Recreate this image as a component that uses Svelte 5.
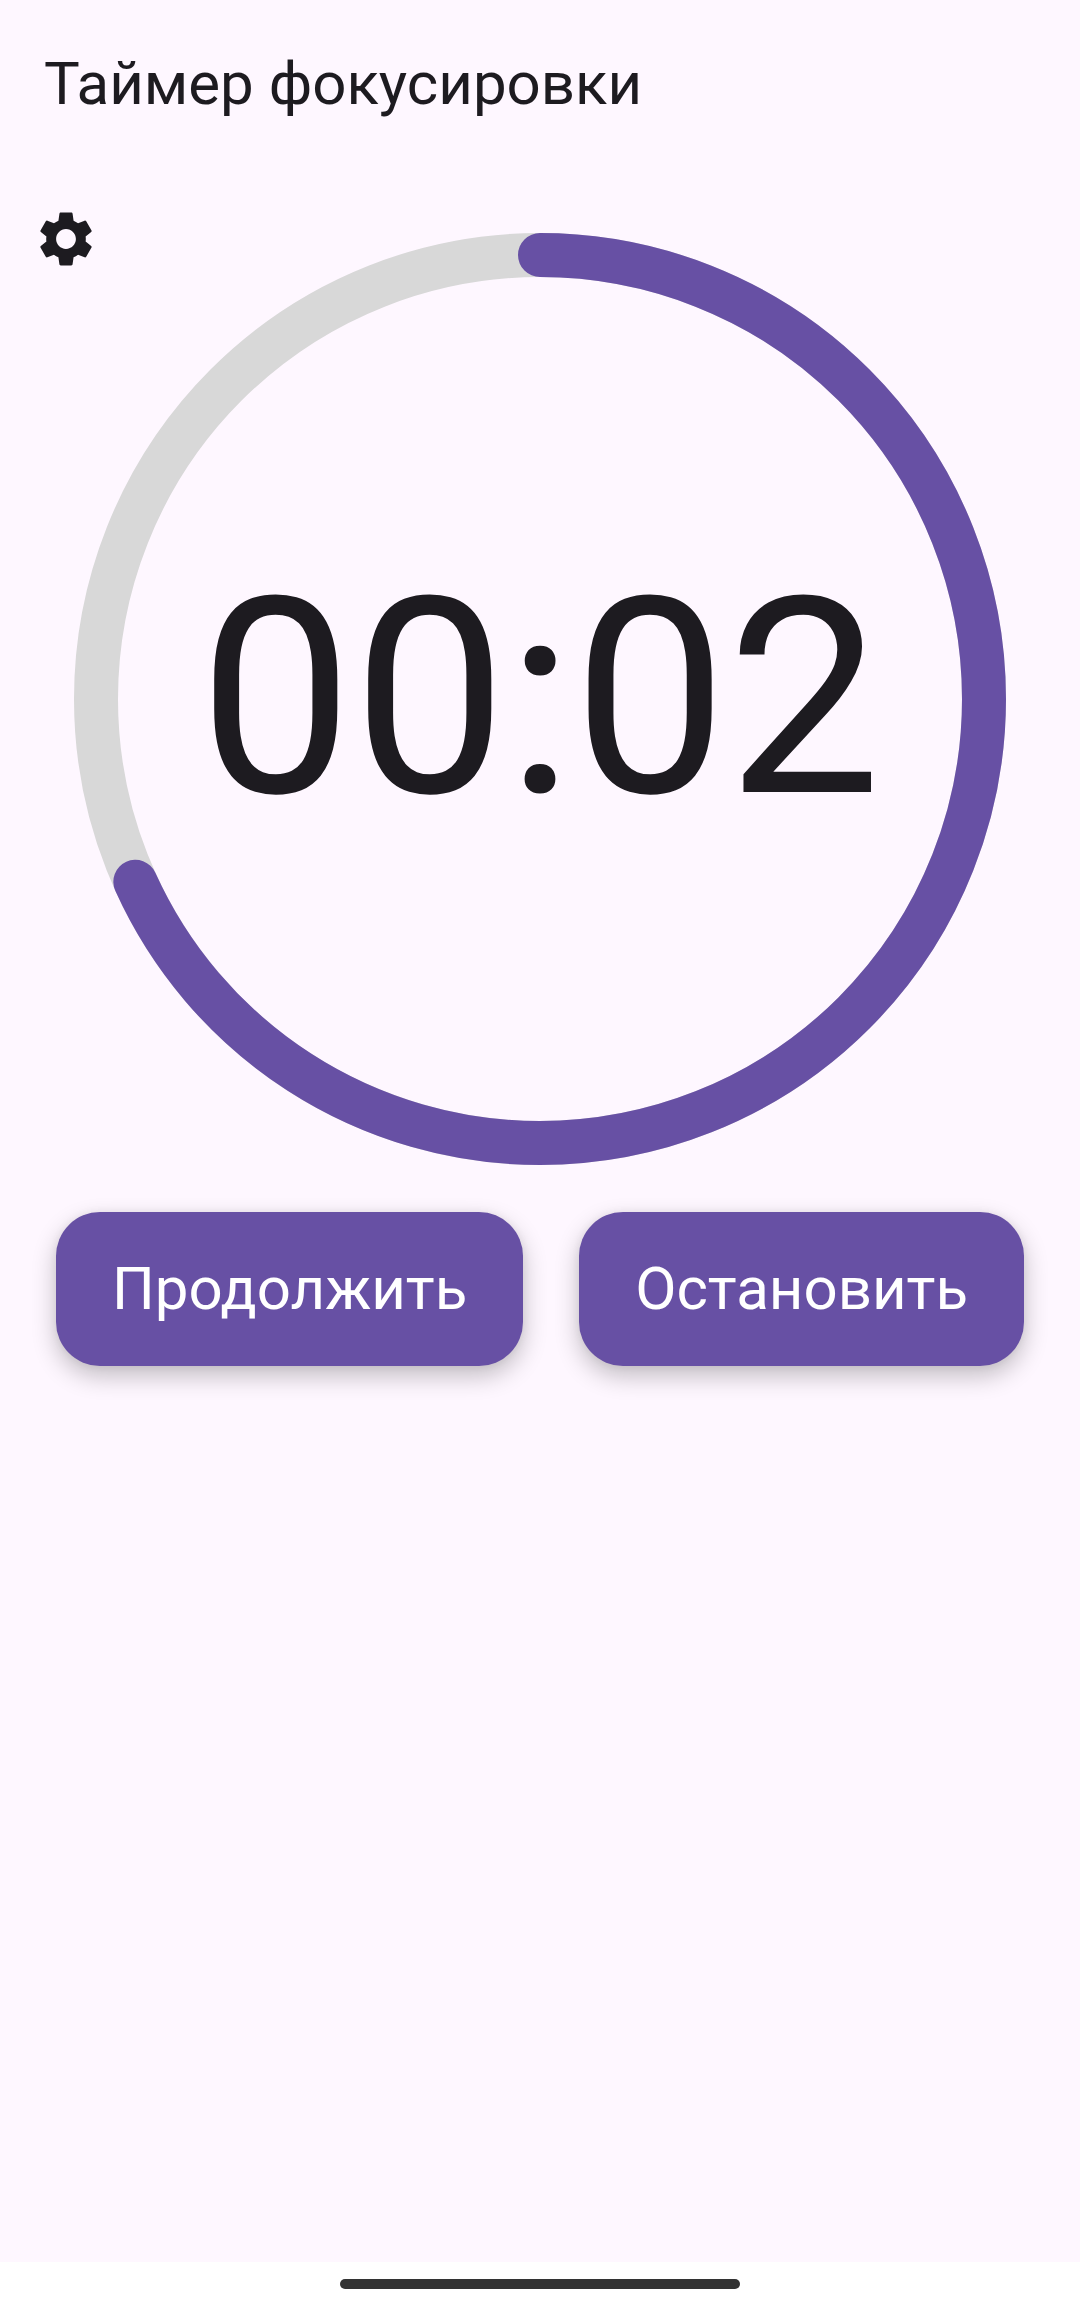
<script>
  let seconds = $state(2);
  let progress = $state(0.6825);

  const time = $derived(
    [Math.floor(seconds / 60), seconds % 60].map((n) => String(n).padStart(2, '0')).join(':')
  );

  function stop() {
    seconds = 0;
    progress = 0;
  }
</script>

<div class="screen">
  <header>
    <h1>Таймер фокусировки</h1>
  </header>

  <main>
    <section class="stage">
      <button class="settings" type="button" aria-label="Настройки">
        <svg viewBox="0 0 24 24" aria-hidden="true">
          <path
            d="M19.14 12.94c.04-.3.06-.61.06-.94 0-.32-.02-.64-.07-.94l2.03-1.58c.18-.14.23-.41.12-.61l-1.92-3.32c-.12-.22-.37-.29-.59-.22l-2.39.96c-.5-.38-1.03-.7-1.62-.94l-.36-2.54c-.04-.24-.24-.41-.48-.41h-3.84c-.24 0-.43.17-.47.41l-.36 2.54c-.59.24-1.13.57-1.62.94l-2.39-.96c-.22-.08-.47 0-.59.22L2.74 8.87c-.12.21-.08.47.12.61l2.03 1.58c-.05.3-.09.63-.09.94s.02.64.07.94l-2.03 1.58c-.18.14-.23.41-.12.61l1.92 3.32c.12.22.37.29.59.22l2.39-.96c.5.38 1.03.7 1.62.94l.36 2.54c.05.24.24.41.48.41h3.84c.24 0 .44-.17.47-.41l.36-2.54c.59-.24 1.13-.56 1.62-.94l2.39.96c.22.08.47 0 .59-.22l1.92-3.32c.12-.22.07-.47-.12-.61l-2.01-1.58zM12 15.6c-1.98 0-3.6-1.62-3.6-3.6s1.62-3.6 3.6-3.6 3.6 1.62 3.6 3.6-1.62 3.6-3.6 3.6z"
          />
        </svg>
      </button>

      <div class="dial">
        <svg class="ring" viewBox="0 0 932 932" aria-hidden="true">
          <circle class="track" cx="466" cy="466" r="444" />
          {#if progress > 0}
            <circle
              class="arc"
              cx="466"
              cy="466"
              r="444"
              pathLength="1"
              stroke-dasharray="{progress} 1"
              transform="rotate(-90 466 466)"
            />
          {/if}
        </svg>
        <span class="time" role="timer">{time}</span>
      </div>
    </section>

    <div class="actions">
      <button class="action" type="button">Продолжить</button>
      <button class="action" type="button" onclick={stop}>Остановить</button>
    </div>
  </main>

  <footer><span class="handle"></span></footer>
</div>

<style>
  :global(body) {
    background: #fef7ff;
  }

  .screen {
    display: flex;
    flex-direction: column;
    min-height: 100vh;
    background: #fef7ff;
    color: #1d1b20;
    font-family: Roboto, 'Liberation Sans', sans-serif;
  }

  header {
    padding: 48px 44px 53px;
  }

  h1 {
    margin: 0;
    font-size: 60px;
    font-weight: 400;
    line-height: 72px;
  }

  main {
    flex: 1;
  }

  .stage {
    position: relative;
    padding: 60px 74px 47px;
  }

  .settings {
    position: absolute;
    top: 0;
    left: 0;
    display: grid;
    place-items: center;
    width: 132px;
    height: 132px;
    padding: 0;
    border: 0;
    background: none;
    color: inherit;
  }

  .settings svg {
    width: 66px;
    height: 66px;
    fill: currentColor;
  }

  .dial {
    display: grid;
    place-items: center;
  }

  .ring,
  .time {
    grid-area: 1 / 1;
  }

  .ring {
    display: block;
    width: 100%;
    fill: none;
    stroke-width: 44;
  }

  .track {
    stroke: #d8d8d8;
  }

  .arc {
    stroke: #6750a4;
    stroke-linecap: round;
  }

  .time {
    font-size: 274px;
    line-height: 322px;
  }

  .actions {
    display: flex;
    justify-content: space-evenly;
  }

  .action {
    padding: 41px 56px;
    border: 0;
    border-radius: 44px;
    background: #6750a4;
    box-shadow:
      0 10px 24px rgb(0 0 0 / 24%),
      0 0 8px rgb(0 0 0 / 6%);
    color: #fff;
    font-family: inherit;
    font-size: 60px;
    line-height: 72px;
  }

  footer {
    display: grid;
    place-items: center;
    height: 44px;
    background: #fff;
  }

  .handle {
    width: 37%;
    height: 10px;
    border-radius: 5px;
    background: #333;
  }
</style>
